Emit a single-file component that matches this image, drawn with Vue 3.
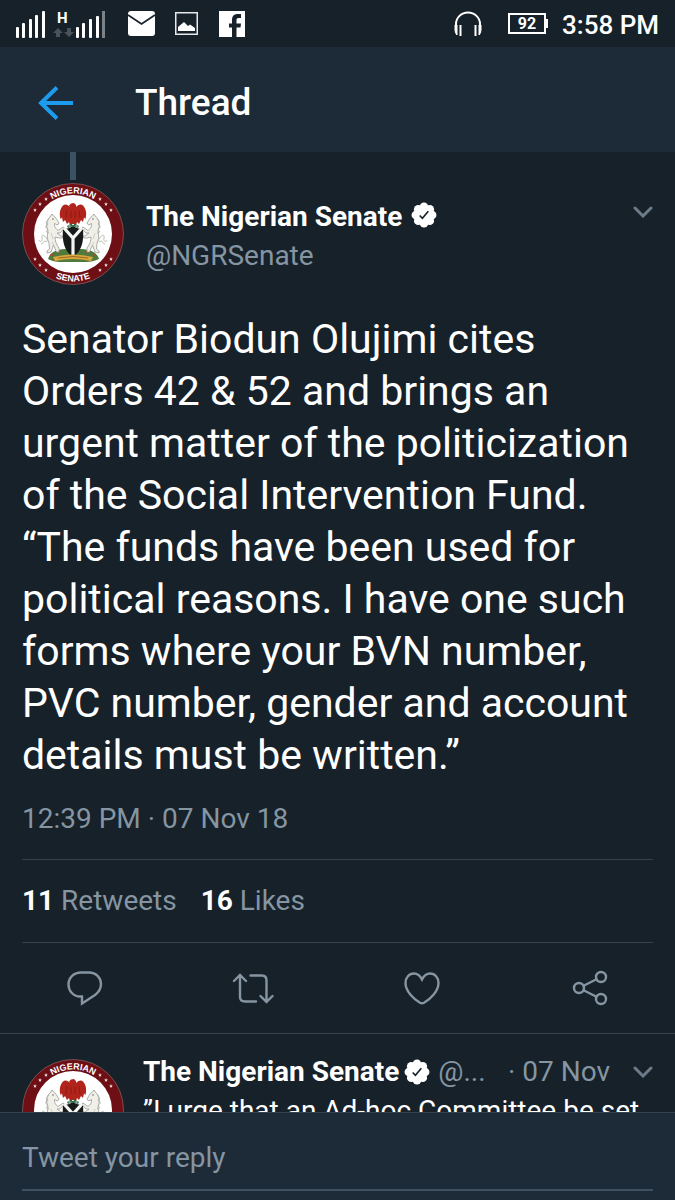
<template>
  <div class="app">
    <!-- Shared drawings -->
    <svg class="sprite" aria-hidden="true">
      <defs>
        <path id="arc-top" d="M10.500 51 A40.500 40.500 0 0 1 91.500 51" />
        <path id="arc-bottom" d="M3.500 51 A47.500 47.500 0 0 0 98.500 51" />
        <path
          id="star"
          d="M0 -2 L0.5 -0.6 L2 -0.6 L0.8 0.3 L1.2 1.7 L0 0.9 L-1.2 1.7 L-0.8 0.3 L-2 -0.6 L-0.5 -0.6 Z"
          fill="#f6e9e4"
        />
        <g id="horse">
          <path
            d="M28 34 L30 31 L31.5 33 C34 34 35 37 37 40 L35.5 42 L32.5 40.500 C32 44 34 46 36 47.500 L41 44 L42.500 45 L38 50 L35 50 L39 53 L41 53 L40.500 55 L37 55 L33 54 C33 58 34 61 37 65 L37 69 L34.500 69 L31.500 62 L29 69 L25 70 L25 68 L27.500 66 L27 60 C25 57 25 52 26 48 C24 43 24 37 28 34 Z"
            fill="#f0efe8"
            stroke="#9a9b94"
            stroke-width="0.8"
          />
          <path d="M27 36 L24.500 39 L26 41 L23.500 44 L26 46 L24.500 49 L27 50" fill="none" stroke="#b4b5ad" />
          <path
            d="M26 58 C23 51 19 51 20 55 C21 58 18 60 17 57 M25 59 C21 56 22 61 19 61"
            fill="none"
            stroke="#b9bab2"
          />
          <path d="M29 50 L31 56 M30 59 L33 65" fill="none" stroke="#c3c4bc" stroke-width="0.8" />
          <circle cx="31" cy="36" r="0.7" fill="#555" />
        </g>
        <symbol id="seal" viewBox="0 0 102 102">
          <circle cx="51" cy="51" r="50.5" fill="#6d0f15" stroke="#9c8a84" stroke-width="0.5" />
          <circle cx="51" cy="51" r="39" fill="#fff" />
          <text class="seal-text"><textPath href="#arc-top" startOffset="50%" text-anchor="middle">NIGERIAN</textPath></text>
          <text class="seal-text"><textPath href="#arc-bottom" startOffset="50%" text-anchor="middle">SENATE</textPath></text>
          <use v-for="(s, i) in stars" :key="i" href="#star" :x="s[0]" :y="s[1]" />
          <path d="M26 76 C29 66 39 66 51 66 C63 66 74 66 77 76 C70 80 61 79 51 79 C41 79 32 80 26 76 Z" fill="#4f7a3c" />
          <path d="M28 72 h3 M35 69 h3 M64 69 h3 M71 72 h3 M32 77 h3 M67 77 h3" stroke="#b5452f" stroke-width="1.5" />
          <use href="#horse" />
          <use href="#horse" transform="matrix(-1 0 0 1 102 0)" />
          <path
            d="M41 46 C45 46 48 45 51 43 C54 45 57 46 61 46 C62 58 60 68 51 74 C42 68 40 58 41 46 Z"
            fill="#161a1b"
          />
          <path d="M42 45 L51 55 L60 45 M51 54 V73" fill="none" stroke="#f4f4f0" stroke-width="3.2" />
          <path d="M31 74 Q51 69 71 74 L69 78 Q51 74 33 78 Z" fill="#d9a73a" />
          <path d="M36 75 Q51 72 66 75" fill="none" stroke="#8c5a24" stroke-width="0.8" />
          <path
            d="M48 24 L47 22.500 L49 20.500 L52 20 L54 22 L54 24 C56 21.500 59 20.500 61 22.500 C64 26 65 30 63.500 36 L62 34.500 L61 39 L59 37 L57 41 L55 39 L54 42 L48 42 L47 39 L45 41 L43 37 L41 39 L40 34.500 L38.500 36 C37 30 38 26 41 22.500 C43 20.500 46 21.500 48 24 Z"
            fill="#b0241c"
          />
          <path d="M45 27 L44 35 M57 27 L58 35 M49 28 V35 M53 28 V35" stroke="#86170f" stroke-width="0.8" />
          <path d="M45 43 Q51 38 57 43 L56 45 Q51 42 46 45 Z" fill="#2f6d4d" />
          <path d="M46.500 43 h2 M50 41.500 h2 M53.500 43 h2" stroke="#e8e8df" />
        </symbol>
        <symbol id="verified" viewBox="0 0 24 24">
          <g fill="#fff">
            <circle cx="12" cy="12" r="9" />
            <circle v-for="(b, i) in bumps" :key="i" :cx="b[0]" :cy="b[1]" r="4" />
          </g>
          <path d="M8 12.5 L10.500 15 L16 8.500" fill="none" stroke="#17212a" stroke-width="1.5" />
        </symbol>
        <symbol id="chevron" viewBox="0 0 20 12">
          <path d="M2 2 L10 10 L18 2" fill="none" stroke="#6b7b88" stroke-width="3" stroke-linecap="round" />
        </symbol>
      </defs>
    </svg>

    <div class="status-bar">
      <svg width="91" height="30" viewBox="0 0 91 30">
        <g fill="#fff">
          <rect x="1" y="18" width="3" height="11" rx="1" />
          <rect x="7" y="14" width="3" height="15" rx="1" />
          <rect x="14" y="10" width="3" height="19" rx="1" />
          <rect x="20" y="6" width="3" height="23" rx="1" />
          <rect x="27" y="2" width="3" height="27" rx="1" />
          <rect x="61" y="18" width="3" height="11" rx="1" />
          <rect x="67" y="14" width="3" height="15" rx="1" />
          <rect x="74" y="10" width="3" height="19" rx="1" />
          <rect x="81" y="7" width="3" height="22" rx="1" />
        </g>
        <rect x="87" y="2" width="3" height="27" fill="#7b8288" />
        <text class="network" x="42" y="14">H</text>
        <path d="M43 19 L48 24 H45 V28 H41 V24 H38 Z M54 28 L49 23 H52 V19 H56 V23 H59 Z" fill="#4a525a" />
      </svg>
      <svg class="mail" width="27" height="25" viewBox="0 0 27 25">
        <rect width="27" height="25" rx="3" fill="#fff" />
        <path d="M0 4 L13.5 13 L27 4" fill="none" stroke="#17212a" stroke-width="1.8" />
      </svg>
      <svg class="picture" width="23" height="23" viewBox="0 0 23 23">
        <rect x="0.75" y="0.75" width="21.5" height="21.5" fill="none" stroke="#e6e8ea" stroke-width="1.5" />
        <path d="M3 19 V15 L9 10 L13 14 L15 12.5 L20 16 V19 Z" fill="#fff" />
      </svg>
      <svg class="facebook" width="26" height="26" viewBox="0 0 26 26">
        <rect width="26" height="26" fill="#fff" />
        <path d="M13 26 V16.500 H10 V12.500 H13 V9 C13 5 15 3 19 3 H22 V7 H19.500 C18 7 17.500 7.700 17.500 9 V12.500 H22 L21.500 16.500 H17.500 V26 Z" fill="#17212a" />
      </svg>
      <svg class="headphones" width="28" height="26" viewBox="0 0 28 26">
        <path d="M2 18 V13 A12 11.5 0 0 1 26 13 V18" fill="none" stroke="#fff" stroke-width="2" />
        <path d="M1 14 H3 V24 Q1 22 1 19 Z M27 14 H25 V24 Q27 22 27 19 Z" fill="#fff" stroke="#fff" />
        <path d="M6.500 14 V25 M21.500 14 V25" stroke="#fff" stroke-width="2" />
      </svg>
      <div class="battery">92</div>
      <span class="clock">3:58 PM</span>
    </div>

    <header class="header">
      <button class="back" type="button" aria-label="Back">
        <svg width="36" height="36" viewBox="0 0 36 36">
          <path d="M19 2.500 L3 18 L19 33.500 M3 18 H35" fill="none" stroke="#1d9bee" stroke-width="4" />
        </svg>
      </button>
      <h1>Thread</h1>
    </header>

    <main class="thread">
      <article>
        <div class="connector"></div>
        <div class="author">
          <svg class="avatar"><use href="#seal" /></svg>
          <div class="names">
            <div class="name">The Nigerian Senate <svg class="verified"><use href="#verified" /></svg></div>
            <div class="muted">@NGRSenate</div>
          </div>
          <button class="more" type="button" aria-label="More">
            <svg width="20" height="12"><use href="#chevron" /></svg>
          </button>
        </div>
        <p class="tweet-text">
          Senator Biodun Olujimi cites Orders 42 &amp; 52 and brings an urgent matter of the politicization of the Social
          Intervention Fund. “The funds have been used for political reasons. I have one such forms where your BVN
          number, PVC number, gender and account details must be written.”
        </p>
        <div class="time muted">12:39 PM · 07 Nov 18</div>
        <div class="stats">
          <a v-for="stat in stats" :key="stat.label" href="#" class="muted">
            <strong>{{ stat.count }}</strong> {{ stat.label }}
          </a>
        </div>
        <div class="actions">
          <button type="button" aria-label="Reply">
            <svg viewBox="0 0 44 40">
              <path d="M19 4.500 H27 C34 4.500 39 9.500 39 16 C39 20.500 37 24 33 27 L20 35.500 V28.500 H18 C11 28.500 6.500 22.500 6.500 16.500 C6.500 9.500 12 4.500 19 4.500 Z" />
            </svg>
          </button>
          <button type="button" aria-label="Retweet">
            <svg viewBox="0 0 44 40">
              <path d="M3 13 L9 7 L15 13 M9 7 V29 Q9 33.500 14 33.500 H25 M19.500 7.500 H31 Q35.500 7.500 35.500 12.500 V34 M29.500 28 L35.500 34 L41.500 28" />
            </svg>
          </button>
          <button type="button" aria-label="Like">
            <svg viewBox="0 0 44 40">
              <path d="M22 11.500 C19.500 6.500 17 5.500 14 5.500 C9 5.500 5.500 9.500 5.500 15 C5.500 23.500 14 31.500 20 34.800 Q22 35.800 24 34.800 C30 31.500 38.500 23.500 38.500 15 C38.500 9.500 35 5.500 30 5.500 C27 5.500 24.500 6.500 22 11.500 Z" />
            </svg>
          </button>
          <button type="button" aria-label="Share">
            <svg viewBox="0 0 44 40">
              <circle cx="10" cy="20" r="5" />
              <circle cx="32" cy="9" r="5" />
              <circle cx="32" cy="31" r="5" />
              <path d="M14.500 17.800 L27.500 11.200 M14.500 22.200 L27.500 28.800" />
            </svg>
          </button>
        </div>
      </article>

      <article class="next">
        <svg class="avatar"><use href="#seal" /></svg>
        <div class="next-body">
          <div class="next-head">
            <span class="name">The Nigerian Senate</span>
            <svg class="verified"><use href="#verified" /></svg>
            <span class="handle muted">@...</span>
            <span class="muted">· 07 Nov</span>
            <button class="more" type="button" aria-label="More">
              <svg width="20" height="12"><use href="#chevron" /></svg>
            </button>
          </div>
          <p>”I urge that an Ad-hoc Committee be set</p>
        </div>
      </article>
    </main>

    <form class="reply" @submit.prevent>
      <input v-model="reply" type="text" placeholder="Tweet your reply" aria-label="Tweet your reply" />
    </form>
  </div>
</template>

<script setup>
import { ref } from 'vue';

const reply = ref('');

const stats = [
  { count: 11, label: 'Retweets' },
  { count: 16, label: 'Likes' },
];

// Stars on the ring of the seal, left side mirrored to the right
const leftStars = [[24, 16], [18, 21], [13, 27], [13, 76], [18, 82], [24, 87]];
const stars = leftStars.concat(leftStars.map(([x, y]) => [102 - x, y]));

// Scalloped edge of the verified badge
const bumps = Array.from({ length: 8 }, (_, i) => {
  const angle = (i * Math.PI) / 4;
  return [12 + 7.5 * Math.cos(angle), 12 + 7.5 * Math.sin(angle)];
});
</script>

<style>
body {
  margin: 0;
  background: #17212a;
}
</style>

<style scoped>
.app {
  display: flex;
  flex-direction: column;
  height: 100vh;
  overflow: hidden;
  background: #17212a;
  color: #fff;
  font-family: Roboto, "Liberation Sans", sans-serif;
  font-size: 28px;
  line-height: 36px;
}

.sprite {
  position: absolute;
  width: 0;
  height: 0;
}

.seal-text {
  font: bold 9px "Liberation Sans", sans-serif;
  fill: #fff;
}

button {
  display: flex;
  padding: 0;
  border: 0;
  background: none;
  cursor: pointer;
}

p,
h1 {
  margin: 0;
}

.muted {
  color: #8595a2;
}

.status-bar {
  display: flex;
  align-items: center;
  flex: none;
  height: 47px;
  padding: 0 16px 0 15px;
}

.network {
  font-size: 15px;
  font-weight: 700;
  fill: #fff;
}

.mail {
  margin-left: 22px;
}

.picture {
  margin-left: 20px;
}

.facebook {
  margin-left: 21px;
}

.headphones {
  margin-left: auto;
}

.battery {
  position: relative;
  width: 34px;
  margin: 0 16px 0 26px;
  border: 2px solid #fff;
  font-size: 16px;
  font-weight: 700;
  line-height: 17px;
  text-align: center;
}

.battery::after {
  content: "";
  position: absolute;
  top: 4px;
  right: -4px;
  width: 2px;
  height: 9px;
  background: #fff;
}

.clock {
  padding-top: 2px;
  font-size: 26px;
  font-weight: 500;
}

.header {
  display: flex;
  align-items: center;
  flex: none;
  box-sizing: border-box;
  height: 105px;
  padding: 6px 0 0 38px;
  gap: 61px;
  background: #1d2a38;
}

h1 {
  font-size: 37px;
  font-weight: 500;
  line-height: 44px;
}

.thread {
  flex: 1;
  min-height: 0;
  overflow: hidden;
}

.connector {
  width: 6px;
  height: 28px;
  margin: 0 0 3px 70px;
  background: #3b5164;
}

.author {
  display: flex;
  padding: 0 22px;
}

.avatar {
  flex: none;
  width: 102px;
  height: 102px;
}

.names {
  flex: 1;
  padding-top: 14px;
  margin-left: 22px;
  line-height: 39px;
}

.name {
  font-weight: 700;
}

.verified {
  flex: none;
  width: 26px;
  height: 26px;
  vertical-align: -2px;
}

.names .verified {
  margin-left: 2px;
}

.author .more {
  align-self: flex-start;
  margin-top: 23px;
}

.tweet-text {
  padding: 28px 22px 4px;
  font-size: 41px;
  line-height: 52px;
}

.time {
  margin: 0 22px;
  padding: 16px 0 22px;
  border-bottom: 1px solid #35424e;
}

.stats {
  display: flex;
  gap: 24px;
  margin: 0 22px;
  padding: 23px 0;
  border-bottom: 1px solid #35424e;
}

.stats a {
  text-decoration: none;
}

.stats strong {
  color: #fff;
}

.actions {
  display: grid;
  grid-template-columns: repeat(4, 1fr);
  justify-items: center;
  padding: 25px 0;
  border-bottom: 1px solid #35424e;
}

.actions svg {
  width: 44px;
  height: 40px;
  fill: none;
  stroke: #8595a2;
  stroke-width: 2.4;
  stroke-linecap: round;
}

.next {
  display: flex;
  gap: 19px;
  padding: 25px 22px 0;
}

.next-body {
  flex: 1;
  min-width: 0;
  margin-top: -6px;
}

.next-body p {
  padding-top: 2px;
  white-space: nowrap;
}

.next-head {
  display: flex;
  align-items: center;
  line-height: 38px;
}

.next-head .verified {
  margin: 0 8px 0 5px;
}

.handle {
  flex: 1;
}

.next-head .more {
  margin-left: 23px;
}

.reply {
  flex: none;
  padding: 18px 22px 9px;
  border-top: 1px solid #35424e;
  background: #1d2a38;
}

.reply input {
  box-sizing: border-box;
  width: 100%;
  height: 60px;
  padding: 0 0 6px;
  border: 0;
  border-bottom: 2px solid #3f5060;
  outline: none;
  background: none;
  color: #fff;
  font: inherit;
}

.reply input::placeholder {
  color: #8595a2;
  opacity: 1;
}
</style>
